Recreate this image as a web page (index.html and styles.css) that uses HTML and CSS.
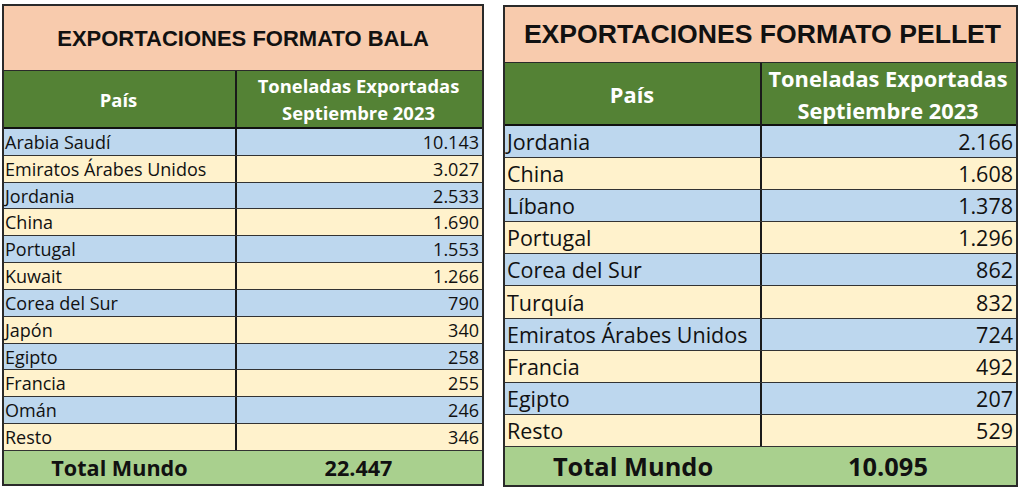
FILE: index.html
```html
<!DOCTYPE html>
<html lang="es">
<head>
<meta charset="utf-8">
<title>Exportaciones</title>
<link rel="stylesheet" href="styles.css">
</head>
<body>
<div class="page">
  <section class="tbl bala">
    <div class="title">EXPORTACIONES FORMATO BALA</div>
    <div class="row head"><div class="c1">País</div><div class="c2">Toneladas Exportadas<br>Septiembre 2023</div></div>
    <div class="row blue"><div class="c1">Arabia Saudí</div><div class="c2 num">10.143</div></div>
    <div class="row cream"><div class="c1">Emiratos Árabes Unidos</div><div class="c2 num">3.027</div></div>
    <div class="row blue"><div class="c1">Jordania</div><div class="c2 num">2.533</div></div>
    <div class="row cream"><div class="c1">China</div><div class="c2 num">1.690</div></div>
    <div class="row blue"><div class="c1">Portugal</div><div class="c2 num">1.553</div></div>
    <div class="row cream"><div class="c1">Kuwait</div><div class="c2 num">1.266</div></div>
    <div class="row blue"><div class="c1">Corea del Sur</div><div class="c2 num">790</div></div>
    <div class="row cream"><div class="c1">Japón</div><div class="c2 num">340</div></div>
    <div class="row blue"><div class="c1">Egipto</div><div class="c2 num">258</div></div>
    <div class="row cream"><div class="c1">Francia</div><div class="c2 num">255</div></div>
    <div class="row blue"><div class="c1">Omán</div><div class="c2 num">246</div></div>
    <div class="row cream"><div class="c1">Resto</div><div class="c2 num">346</div></div>
    <div class="row total"><div class="c1">Total Mundo</div><div class="c2">22.447</div></div>
  </section>
  <section class="tbl pellet">
    <div class="title">EXPORTACIONES FORMATO PELLET</div>
    <div class="row head"><div class="c1">País</div><div class="c2">Toneladas Exportadas<br>Septiembre 2023</div></div>
    <div class="row blue"><div class="c1">Jordania</div><div class="c2 num">2.166</div></div>
    <div class="row cream"><div class="c1">China</div><div class="c2 num">1.608</div></div>
    <div class="row blue"><div class="c1">Líbano</div><div class="c2 num">1.378</div></div>
    <div class="row cream"><div class="c1">Portugal</div><div class="c2 num">1.296</div></div>
    <div class="row blue"><div class="c1">Corea del Sur</div><div class="c2 num">862</div></div>
    <div class="row cream"><div class="c1">Turquía</div><div class="c2 num">832</div></div>
    <div class="row blue"><div class="c1">Emiratos Árabes Unidos</div><div class="c2 num">724</div></div>
    <div class="row cream"><div class="c1">Francia</div><div class="c2 num">492</div></div>
    <div class="row blue"><div class="c1">Egipto</div><div class="c2 num">207</div></div>
    <div class="row cream"><div class="c1">Resto</div><div class="c2 num">529</div></div>
    <div class="row total"><div class="c1">Total Mundo</div><div class="c2">10.095</div></div>
  </section>
</div>
</body>
</html>
```
FILE: styles.css
```css
* { box-sizing: border-box; }
body {
  margin: 0;
  background: #ffffff;
  font-family: "Open Sans", "Lato", sans-serif;
  color: #111111;
}
.page {
  display: flex;
  align-items: flex-start;
  gap: 19px;
  padding: 4px 0 0 2px;
}
.tbl {
  display: flex;
  flex-direction: column;
  border: 2px solid #2a2a2a;
}
.bala { width: 482px; }
.pellet { width: 515px; margin-top: 1px; }

.title {
  display: flex;
  align-items: center;
  justify-content: center;
  background: #f8cbad;
  border-bottom: 1px solid #2a2a2a;
  font-family: "Liberation Sans", Arial, sans-serif;
  font-weight: bold;
  color: #111111;
  white-space: nowrap;
}
.bala .title { height: 65px; font-size: 22px; padding-top: 1px; }
.pellet .title { height: 56px; font-size: 26.6px; padding-left: 4px; }

.row {
  display: grid;
  border-bottom: 1px solid #333333;
}
.bala .row { grid-template-columns: 233px 1fr; height: 26.83px; font-size: 18px; }
.pellet .row { grid-template-columns: 257px 1fr; height: 32.1px; font-size: 21.5px; }

.c1, .c2 {
  display: flex;
  align-items: center;
  white-space: nowrap;
  padding: 0 3px 0 1px;
}
.c1 { border-right: 2px solid #1a1a1a; }
.pellet .c1 { padding-left: 2px; }
.num { justify-content: flex-end; }

.blue { background: #bdd7ee; }
.cream { background: #fff2cc; }

.row.head {
  background: #548235;
  color: #ffffff;
  font-weight: bold;
  border-bottom: 2px solid #111111;
}
.head .c1, .head .c2 { justify-content: center; text-align: center; }
.bala .row.head { height: 58px; font-size: 18.4px; line-height: 27px; }
.pellet .row.head { height: 63px; font-size: 21.8px; line-height: 32px; }

.row.total {
  background: #a9d08e;
  font-weight: bold;
  border-bottom: none;
}
.total .c1, .total .c2 { justify-content: center; border-right: none; }
.bala .row.total { height: 33px; font-size: 21.6px; }
.pellet .row.total { height: 38px; font-size: 25.4px; }
```
